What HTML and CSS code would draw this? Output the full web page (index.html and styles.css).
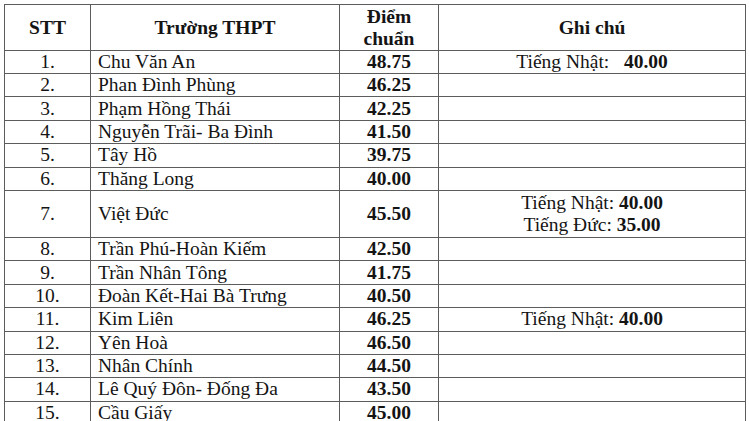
FILE: index.html
```html
<!DOCTYPE html>
<html lang="vi">
<head>
<meta charset="utf-8">
<title>Điểm chuẩn THPT</title>
<link rel="stylesheet" href="styles.css">
</head>
<body>
<div class="page">
<table class="scores">
  <colgroup>
    <col class="c-stt">
    <col class="c-name">
    <col class="c-score">
    <col class="c-note">
  </colgroup>
  <thead>
    <tr class="head">
      <th>STT</th>
      <th>Trường THPT</th>
      <th class="two">Điểm<br>chuẩn</th>
      <th>Ghi chú</th>
    </tr>
  </thead>
  <tbody>
    <tr class="first"><td class="stt">1.</td><td class="name">Chu Văn An</td><td class="score">48.75</td><td class="note">Tiếng Nhật:&nbsp;&nbsp; <b>40.00</b></td></tr>
    <tr><td class="stt">2.</td><td class="name">Phan Đình Phùng</td><td class="score">46.25</td><td class="note"></td></tr>
    <tr><td class="stt">3.</td><td class="name">Phạm Hồng Thái</td><td class="score">42.25</td><td class="note"></td></tr>
    <tr><td class="stt">4.</td><td class="name">Nguyễn Trãi- Ba Đình</td><td class="score">41.50</td><td class="note"></td></tr>
    <tr><td class="stt">5.</td><td class="name">Tây Hồ</td><td class="score">39.75</td><td class="note"></td></tr>
    <tr><td class="stt">6.</td><td class="name">Thăng Long</td><td class="score">40.00</td><td class="note"></td></tr>
    <tr class="tall"><td class="stt">7.</td><td class="name">Việt Đức</td><td class="score">45.50</td><td class="note">Tiếng Nhật: <b>40.00</b><br>Tiếng Đức: <b>35.00</b></td></tr>
    <tr><td class="stt">8.</td><td class="name">Trần Phú-Hoàn Kiếm</td><td class="score">42.50</td><td class="note"></td></tr>
    <tr><td class="stt">9.</td><td class="name">Trần Nhân Tông</td><td class="score">41.75</td><td class="note"></td></tr>
    <tr><td class="stt">10.</td><td class="name">Đoàn Kết-Hai Bà Trưng</td><td class="score">40.50</td><td class="note"></td></tr>
    <tr><td class="stt">11.</td><td class="name">Kim Liên</td><td class="score">46.25</td><td class="note">Tiếng Nhật: <b>40.00</b></td></tr>
    <tr><td class="stt">12.</td><td class="name">Yên Hoà</td><td class="score">46.50</td><td class="note"></td></tr>
    <tr><td class="stt">13.</td><td class="name">Nhân Chính</td><td class="score">44.50</td><td class="note"></td></tr>
    <tr><td class="stt">14.</td><td class="name">Lê Quý Đôn- Đống Đa</td><td class="score">43.50</td><td class="note"></td></tr>
    <tr><td class="stt">15.</td><td class="name">Cầu Giấy</td><td class="score">45.00</td><td class="note"></td></tr>
  </tbody>
</table>
</div>
</body>
</html>
```

FILE: styles.css
```css
html, body {
  margin: 0;
  padding: 0;
  background: #ffffff;
  overflow: hidden;
}

.page {
  padding: 4px 0 0 4px;
}

.scores {
  border-collapse: collapse;
  table-layout: fixed;
  width: 741px;
  font-family: "Liberation Serif", "Times New Roman", serif;
  font-size: 19.5px;
  color: #141414;
}

.c-stt { width: 86px; }
.c-name { width: 249px; }
.c-score { width: 99px; }
.c-note { width: 307px; }

.scores th,
.scores td {
  border: 1px solid #5c5c5c;
  padding: 0;
  vertical-align: middle;
  line-height: 22px;
  white-space: nowrap;
  overflow: hidden;
}

.scores th {
  font-weight: bold;
  text-align: center;
}

.head { height: 46px; }
.head th { padding-top: 1px; }

.scores tbody tr { height: 23.4px; }
.scores tbody tr.first { height: 21.5px; }
.scores tbody tr.tall { height: 47px; }

.stt { text-align: center; }
.name { text-align: left; padding-left: 7px !important; }
.score { text-align: center; font-weight: bold; }
.note { text-align: center; }
.note b { font-weight: bold; }
```
